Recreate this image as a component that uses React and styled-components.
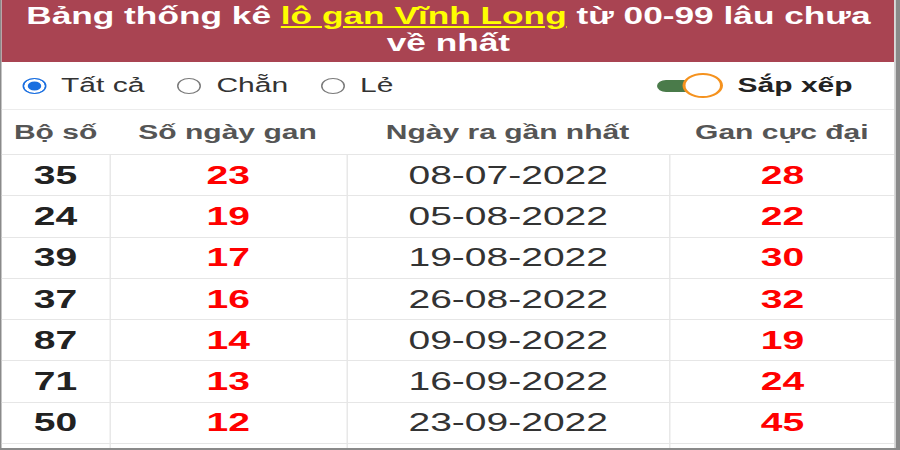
import React from 'react'
import styled, { createGlobalStyle } from 'styled-components'

const GlobalStyle = createGlobalStyle`
  html, body {
    margin: 0;
    padding: 0;
    background: #8a8a8a;
    overflow: hidden;
  }
`

// the whole board is drawn at 600px and stretched to 900px, like the screenshot
const Page = styled.div`
  width: 600px;
  height: 450px;
  box-sizing: border-box;
  padding: 0 2.6px 2.5px 1.4px;
  background: #8a8a8a;
  transform: scaleX(1.5);
  transform-origin: 0 0;
  font-family: "Liberation Sans", Arial, sans-serif;
`

const Panel = styled.div`
  height: 100%;
  background: #fff;
  border-right: 1px solid #d9d9d9;
  overflow: hidden;
`

const Title = styled.h2`
  margin: 0;
  padding: 3px 6px 6px;
  background: #a94452;
  color: #fff;
  font-size: 23.5px;
  line-height: 26.5px;
  font-weight: 700;
  text-align: center;

  a {
    color: #ffff00;
    text-decoration: underline;
    text-decoration-thickness: 2px;
    text-underline-offset: 2px;
  }
`

const FilterBar = styled.div`
  display: flex;
  align-items: center;
  height: 48px;
  padding-left: 13.3px;
  border-bottom: 1px solid #ececec;
  box-sizing: border-box;
`

const Option = styled.label`
  display: flex;
  align-items: center;
  gap: 10px;
  margin-right: 22px;
  font-size: 20px;
  color: #333;
`

const Radio = styled.span`
  width: 16px;
  height: 16px;
  border-radius: 50%;
  box-sizing: border-box;
  border: ${p => (p.$checked ? '1.5px solid #1a6fe0' : '1px solid #7a7a7a')};
  background: ${p => (p.$checked ? '#1a6fe0' : '#fff')};
  box-shadow: ${p => (p.$checked ? 'inset 0 0 0 2.5px #fff' : 'none')};
`

const SortGroup = styled.div`
  display: flex;
  align-items: center;
  gap: 10px;
  margin-left: auto;
  margin-right: 28px;
`

const Toggle = styled.div`
  position: relative;
  width: 43.3px;
  height: 25px;
  display: flex;
  align-items: center;
`

const Track = styled.span`
  width: 29px;
  height: 12px;
  border-radius: 6px;
  background: #4a7b4a;
`

const Knob = styled.span`
  position: absolute;
  left: 16.7px;
  top: 0;
  width: 26.6px;
  height: 25px;
  box-sizing: border-box;
  border-radius: 50%;
  border: 2px solid #f5921e;
  background: #fff;
`

const SortLabel = styled.span`
  font-size: 20px;
  font-weight: 700;
  color: #222;
`

const cols = '71.3px 158px 215.3px 1fr'

const HeadRow = styled.div`
  display: grid;
  grid-template-columns: ${cols};
  height: 45px;
  border-bottom: 1px solid #e6e6e6;
  box-sizing: border-box;
`

const HeadCell = styled.div`
  display: flex;
  align-items: center;
  justify-content: center;
  font-size: 20px;
  font-weight: 700;
  color: #555;
`

const Row = styled.div`
  display: grid;
  grid-template-columns: ${cols};
  height: 41.3px;
  border-bottom: 1px solid #e6e6e6;
  box-sizing: border-box;
`

const tones = {
  num: { color: '#222', weight: 700 },
  red: { color: '#ff0000', weight: 700 },
  date: { color: '#333', weight: 400 },
}

const Cell = styled.div`
  display: flex;
  align-items: center;
  justify-content: center;
  font-size: 26px;
  color: ${p => tones[p.$tone].color};
  font-weight: ${p => tones[p.$tone].weight};
  border-left: ${p => (p.$first ? 'none' : '1.5px solid #e8e8e8')};
`

const rows = [
  ['35', '23', '08-07-2022', '28'],
  ['24', '19', '05-08-2022', '22'],
  ['39', '17', '19-08-2022', '30'],
  ['37', '16', '26-08-2022', '32'],
  ['87', '14', '09-09-2022', '19'],
  ['71', '13', '16-09-2022', '24'],
  ['50', '12', '23-09-2022', '45'],
  ['', '', '', ''],
]

const App = () => {
  return (
    <>
      <GlobalStyle />
      <Page>
        <Panel>
          <Title>
            Bảng thống kê <a href="#">lô gan Vĩnh Long</a> từ 00-99 lâu chưa
            <br />
            về nhất
          </Title>
          <FilterBar>
            <Option><Radio $checked />Tất cả</Option>
            <Option><Radio />Chẵn</Option>
            <Option><Radio />Lẻ</Option>
            <SortGroup>
              <Toggle>
                <Track />
                <Knob />
              </Toggle>
              <SortLabel>Sắp xếp</SortLabel>
            </SortGroup>
          </FilterBar>
          <HeadRow>
            <HeadCell>Bộ số</HeadCell>
            <HeadCell>Số ngày gan</HeadCell>
            <HeadCell>Ngày ra gần nhất</HeadCell>
            <HeadCell>Gan cực đại</HeadCell>
          </HeadRow>
          {rows.map((r, i) => (
            <Row key={i}>
              <Cell $tone="num" $first>{r[0]}</Cell>
              <Cell $tone="red">{r[1]}</Cell>
              <Cell $tone="date">{r[2]}</Cell>
              <Cell $tone="red">{r[3]}</Cell>
            </Row>
          ))}
        </Panel>
      </Page>
    </>
  )
}

export default App
